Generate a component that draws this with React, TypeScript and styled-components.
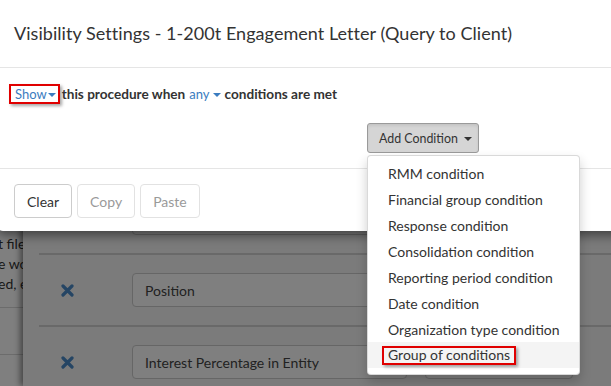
import React from "react";
import styled, { createGlobalStyle } from "styled-components";

const Global = createGlobalStyle`
  html, body { margin: 0; padding: 0; }
  body {
    font-family: Lato, "Open Sans", "Liberation Sans", sans-serif;
    background: #ffffff;
    color: #333;
  }
`;

const Stage = styled.div`
  position: relative;
  width: 611px;
  height: 386px;
  overflow: hidden;
`;

/* ---------- page behind the modal ---------- */
const BackPage = styled.div`
  display: flex;
  height: 100%;
`;

const LeftStrip = styled.div`
  width: 23px;
  flex: none;
  overflow: hidden;
  padding-top: 234px;
  background: #ffffff;
`;

const StripLine = styled.div`
  white-space: nowrap;
  font-size: 14px;
  line-height: 20px;
  color: #333;
  margin-left: -2px;
`;

const StripRule = styled.div<{ $gap: number }>`
  margin-top: ${(p) => p.$gap}px;
  border-top: 1px solid #d8d8d8;
`;

const Panel = styled.div`
  flex: 1;
  background: #f6f6f6;
  padding: 183px 0 0 16px;
  box-shadow: -3px 0 6px rgba(0, 0, 0, 0.45);
  position: relative;
  z-index: 1;
`;

const Row = styled.div`
  display: flex;
  align-items: center;
  height: 70px;
  border-bottom: 2px solid #d2d2d2;
`;

const RemoveIcon = styled.span`
  width: 93px;
  flex: none;
  padding-left: 22px;
  box-sizing: border-box;
  display: flex;
  color: #4a8ac8;
`;

const FieldBox = styled.div<{ $w: number }>`
  width: ${(p) => p.$w}px;
  height: 34px;
  box-sizing: border-box;
  border: 1px solid #cccccc;
  border-radius: 4px;
  background: #ffffff;
  padding: 0 12px;
  display: flex;
  align-items: center;
  font-size: 14px;
  color: #444;
  margin-right: 18px;
  flex: none;
`;

const Backdrop = styled.div`
  position: absolute;
  inset: 0;
  background: rgba(0, 0, 0, 0.5);
  z-index: 5;
`;

/* ---------- modal ---------- */
const Modal = styled.div`
  position: absolute;
  top: 0;
  left: -3px;
  right: -30px;
  background: #ffffff;
  border-radius: 0 0 6px 6px;
  box-shadow: 0 4px 12px rgba(0, 0, 0, 0.5);
  z-index: 10;
`;

const Header = styled.div`
  border-bottom: 1px solid #e5e5e5;
  display: flex;
  align-items: center;
  padding: 0 17px 2px;
  box-sizing: border-box;
  height: 68px;
`;

const Title = styled.h4`
  margin: 0;
  font-size: 18px;
  font-weight: 400;
  color: #333;
  letter-spacing: 0.05px;
`;

const Body = styled.div`
  padding: 16px 12px 15px;
`;

const ConditionLine = styled.div`
  display: flex;
  align-items: center;
  height: 20px;
  font-size: 13.6px;
  font-weight: 700;
  color: #333;
`;

const HighlightBox = styled.span`
  display: inline-flex;
  align-items: center;
  border: 2px solid #e00000;
  box-shadow: 2px 2px 3px rgba(0, 0, 0, 0.35);
  box-sizing: border-box;
`;

const ShowBox = styled(HighlightBox)`
  height: 20px;
  padding: 0 2px 0 4px;
  margin-right: 2px;
`;

const LinkDrop = styled.span<{ $gap?: number; $inner?: number }>`
  display: inline-flex;
  align-items: center;
  color: #3a7cc0;
  font-weight: 400;
  font-size: 13px;
  margin: 0 ${(p) => p.$gap ?? 0}px;
  gap: ${(p) => p.$inner ?? 3}px;
`;

const Caret = styled.span<{ $color: string; $size: number }>`
  display: inline-block;
  width: 0;
  height: 0;
  border-left: ${(p) => p.$size}px solid transparent;
  border-right: ${(p) => p.$size}px solid transparent;
  border-top: ${(p) => p.$size}px solid ${(p) => p.$color};
  margin-top: 1px;
`;

const ButtonRow = styled.div`
  margin-top: 19px;
  padding-left: 358px;
  display: flex;
`;

const DropWrap = styled.div`
  position: relative;
`;

const AddButton = styled.button`
  height: 30px;
  width: 112px;
  padding: 0 0 0 11px;
  font-family: inherit;
  font-size: 12.4px;
  color: #333;
  background: #d5d5d5;
  border: 1px solid #9a9a9a;
  border-radius: 3px;
  display: flex;
  align-items: center;
  gap: 6px;
  box-shadow: inset 0 2px 3px rgba(0, 0, 0, 0.08);
  white-space: nowrap;
`;

const Menu = styled.ul`
  position: absolute;
  top: calc(100% + 2px);
  left: 0;
  width: 213px;
  margin: 0;
  padding: 4px 0 6px;
  list-style: none;
  background: #ffffff;
  border: 1px solid rgba(0, 0, 0, 0.15);
  border-radius: 4px;
  box-shadow: 0 6px 12px rgba(0, 0, 0, 0.2);
  box-sizing: border-box;
`;

const MenuItem = styled.li<{ $active?: boolean }>`
  height: 26px;
  display: flex;
  align-items: center;
  padding-left: ${(p) => (p.$active ? 14 : 20)}px;
  font-size: 14px;
  color: #333;
  background: ${(p) => (p.$active ? "#f4f4f4" : "transparent")};
  white-space: nowrap;
`;

const GroupBox = styled(HighlightBox)`
  height: 19px;
  padding: 0 4px;
  line-height: 14px;
`;

const Footer = styled.div`
  border-top: 1px solid #e5e5e5;
  padding: 15px 17px 13px;
  display: flex;
  gap: 5px;
`;

const FooterButton = styled.button<{ $disabled?: boolean }>`
  height: 34px;
  padding: 0 12px;
  font-family: inherit;
  font-size: 14px;
  background: #ffffff;
  color: ${(p) => (p.$disabled ? "#9a9a9a" : "#333")};
  border: 1px solid ${(p) => (p.$disabled ? "#e2e2e2" : "#cccccc")};
  border-radius: 4px;
`;

const XIcon = () => (
  <svg width="13" height="13" viewBox="0 0 13 13">
    <path
      d="M2 2 L11 11 M11 2 L2 11"
      stroke="currentColor"
      strokeWidth="3.2"
      strokeLinecap="round"
    />
  </svg>
);

const menuItems = [
  "RMM condition",
  "Financial group condition",
  "Response condition",
  "Consolidation condition",
  "Reporting period condition",
  "Date condition",
  "Organization type condition",
];

export default function App() {
  return (
    <Stage>
      <Global />
      <BackPage>
        <LeftStrip>
          <StripLine>t file</StripLine>
          <StripLine>e work</StripLine>
          <StripLine>ed, e</StripLine>
          <StripRule $gap={13} />
          <StripRule $gap={46} />
        </LeftStrip>
        <Panel>
          <Row>
            <RemoveIcon>
              <XIcon />
            </RemoveIcon>
            <FieldBox $w={275}>Name</FieldBox>
          </Row>
          <Row>
            <RemoveIcon>
              <XIcon />
            </RemoveIcon>
            <FieldBox $w={275}>Position</FieldBox>
            <FieldBox $w={148} />
          </Row>
          <Row>
            <RemoveIcon>
              <XIcon />
            </RemoveIcon>
            <FieldBox $w={275}>Interest Percentage in Entity</FieldBox>
            <FieldBox $w={148} />
          </Row>
        </Panel>
      </BackPage>
      <Backdrop />
      <Modal>
        <Header>
          <Title>Visibility Settings - 1-200t Engagement Letter (Query to Client)</Title>
        </Header>
        <Body>
          <ConditionLine>
            <ShowBox>
              <LinkDrop $inner={1}>
                Show <Caret $color="#3a7cc0" $size={4} />
              </LinkDrop>
            </ShowBox>
            this procedure when
            <LinkDrop $gap={4}>
              any <Caret $color="#3a7cc0" $size={4} />
            </LinkDrop>
            conditions are met
          </ConditionLine>
          <ButtonRow>
            <DropWrap>
              <AddButton>
                Add Condition <Caret $color="#333" $size={4} />
              </AddButton>
              <Menu>
                {menuItems.map((m) => (
                  <MenuItem key={m}>{m}</MenuItem>
                ))}
                <MenuItem $active>
                  <GroupBox>Group of conditions</GroupBox>
                </MenuItem>
              </Menu>
            </DropWrap>
          </ButtonRow>
        </Body>
        <Footer>
          <FooterButton>Clear</FooterButton>
          <FooterButton $disabled>Copy</FooterButton>
          <FooterButton $disabled>Paste</FooterButton>
        </Footer>
      </Modal>
    </Stage>
  );
}
